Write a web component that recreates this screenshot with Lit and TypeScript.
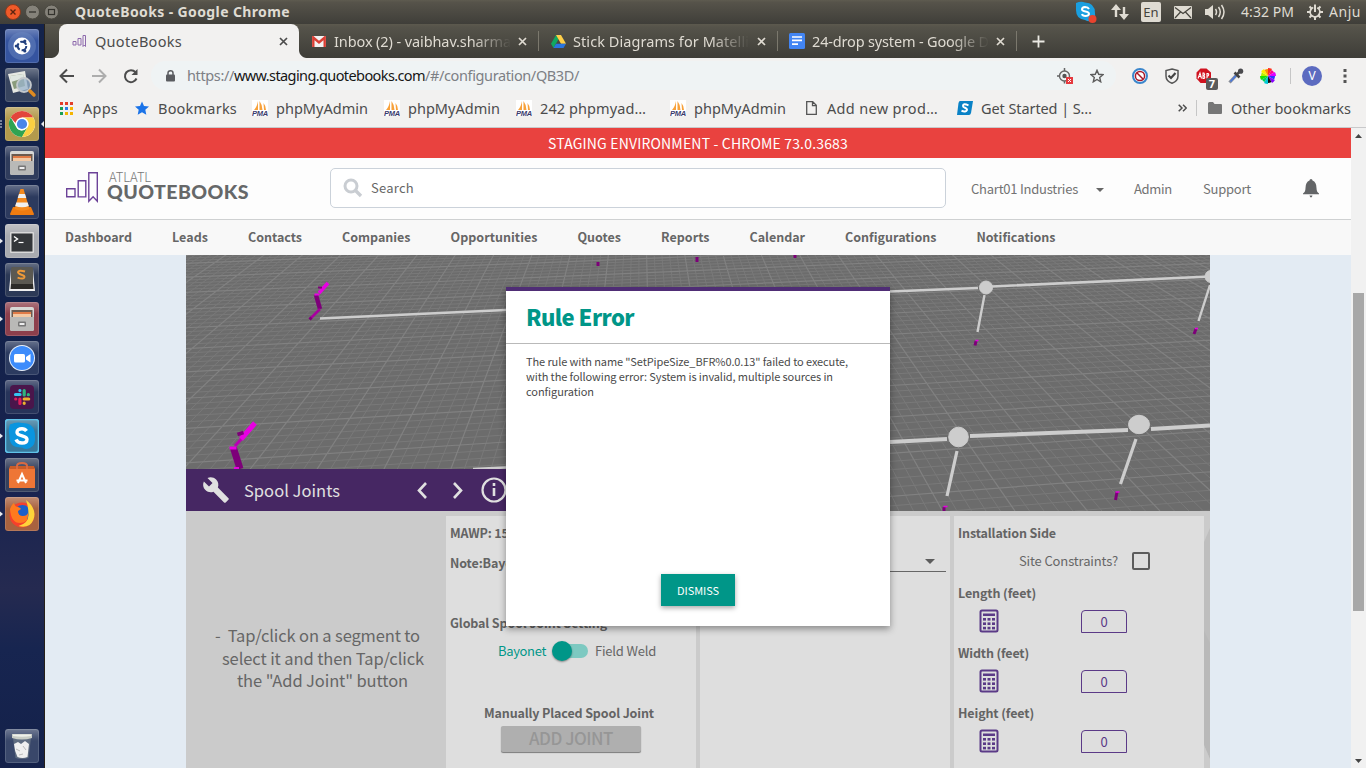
import { LitElement, html, css, svg, nothing } from "lit";
import { customElement, property } from "lit/decorators.js";
import { styleMap } from "lit/directives/style-map.js";

/** A single line of text tracked so that it spans exactly `w` pixels. */
@customElement("fit-text")
class FitText extends LitElement {
  @property({ type: Number }) w = 0;
  @property() text = "";
  static styles = css`
    :host { display: inline-block; white-space: pre; flex: none; }
    span { display: inline-block; white-space: pre; }
  `;
  render() {
    return html`<span>${this.text}</span>`;
  }
  updated() {
    const s = this.renderRoot.querySelector("span") as HTMLElement;
    s.style.letterSpacing = "0px";
    const natural = s.getBoundingClientRect().width;
    const gap = (this.w - natural) / this.text.length;
    s.style.letterSpacing = gap.toFixed(3) + "px";
    this.style.width = this.w + "px";
  }
}

const t = (text: string, w: number, cls = "") =>
  html`<fit-text class=${cls} .text=${text} .w=${w}></fit-text>`;

/* ---------- launcher ---------- */

const cabinet = svg`
  <rect x="5" y="5" width="24" height="24" rx="2" fill="#d8d8d6"/>
  <rect x="6.500" y="8" width="21" height="8" fill="#6b5a50"/>
  <path d="M8 10h18v5H8z" fill="#e07b48"/><path d="M8 12h18v3H8z" fill="#f3c9a4"/>
  <path d="M5 15h24v12a2 2 0 0 1-2 2H7a2 2 0 0 1-2-2z" fill="#b9b9b7"/>
  <rect x="13" y="19.500" width="8" height="5" rx="1" fill="#777"/><rect x="14.500" y="21" width="5" height="2" fill="#eee"/>`;

const launcher: { bg: string; run?: boolean; focus?: boolean; art: unknown }[] = [
  { bg: "#3554a0", art: svg`<circle cx="17" cy="17" r="14" fill="#6f8cc4" opacity=".45"/><circle cx="17" cy="17" r="8.500" fill="#fff"/><circle cx="17" cy="17" r="4.300" fill="none" stroke="#22407e" stroke-width="2" stroke-dasharray="7 2"/><circle cx="11.300" cy="17" r="1.600" fill="#22407e"/><circle cx="19.800" cy="12" r="1.600" fill="#22407e"/><circle cx="19.800" cy="22" r="1.600" fill="#22407e"/>` },
  { bg: "#37445f", art: svg`<path d="M3 6l17-3 3 18-15 4z" fill="#e6e8e2"/><path d="M5 8l13-2 2 12-11 3z" fill="#8a9c7c"/><path d="M5 8l13-2 1 4-13 4z" fill="#dfe6e0"/><circle cx="19" cy="17" r="7" fill="#9ab4cc" fill-opacity=".75" stroke="#c3c8cc" stroke-width="1.800"/><path d="M25 23l4 4" stroke="#e08b20" stroke-width="3.500" stroke-linecap="round"/>` },
  { bg: "#b39a4c", run: true, focus: true, art: svg`<circle cx="17" cy="17" r="13" fill="#fff"/><path d="M5.740 10.500A13 13 0 0 1 28.260 10.500L17 10.500 14 20z" fill="#e2453b"/><path d="M5.740 10.500L11.400 20.200A6.500 6.500 0 0 0 17 23.500L22.600 20.200 17 30A13 13 0 0 1 5.740 10.500z" fill="#2fa351"/><path d="M28.260 10.500A13 13 0 0 1 17 30L22.600 20.200A6.500 6.500 0 0 0 17 10.500z" fill="#fbd042"/><circle cx="17" cy="17" r="6.500" fill="#fff"/><circle cx="17" cy="17" r="5.100" fill="#4a86e8"/>` },
  { bg: "#2f3c5c", art: cabinet },
  { bg: "#2c3a5e", art: svg`<path d="M5 29l3-7h18l3 7q0 1-1 1H6q-1 0-1-1z" fill="#ef7b10"/><path d="M15.500 4h3l6 20q-7.500 3.500-15 0z" fill="#f58a1e"/><path d="M14 9h6l1.300 4h-8.600zM11.300 17.500h11.400l1.100 3.500q-6.800 2.500-13.600 0z" fill="#f0f0f0"/>` },
  { bg: "#a9abb0", run: true, art: svg`<rect x="5" y="8" width="24" height="21" rx="1" fill="#d9d9d9"/><rect x="6.500" y="9.500" width="21" height="18" fill="#34373a"/><path d="M9 12.500l3.500 2.500-3.500 2.500" fill="none" stroke="#fff" stroke-width="1.400"/><path d="M13.500 18.500h5" stroke="#fff" stroke-width="1.200"/>` },
  { bg: "#2c3956", art: svg`<path d="M6 6h22l2 22H4z" fill="#eee"/><rect x="6" y="4" width="22" height="19" rx="1.500" fill="#5b5952"/><path d="M6 21h22l.5 5h-23z" fill="#2c2b28"/><path d="M20 8.500q-6.500-2-7 .6 0 1.600 3.400 2.600t3 2.600q-.8 2.400-6.800.3" fill="none" stroke="#f09a38" stroke-width="2"/>` },
  { bg: "#8d3f4c", run: true, art: cabinet },
  { bg: "#2c3b60", art: svg`<circle cx="17" cy="17" r="13" fill="#e9f1fb"/><circle cx="17" cy="17" r="12" fill="#3d8cfb"/><rect x="9" y="13" width="11" height="8.500" rx="1.500" fill="#fff"/><path d="M21 16l4.500-3v8.500l-4.500-3z" fill="#fff"/>` },
  { bg: "#27345a", art: svg`<rect x="5" y="5" width="24" height="24" rx="4" fill="#4a154b"/><g stroke-width="3.200" stroke-linecap="round"><path d="M10.500 14.500h4.500M14.900 10.500v.1" stroke="#36c5f0"/><path d="M19.200 10.500v4.500M23.300 14.700h.1" stroke="#2eb67d"/><path d="M19.200 19h4.500M19.200 23.200v.1" stroke="#ecb22e"/><path d="M14.900 19v4.500M10.700 19h.1" stroke="#e01e5a"/></g>` },
  { bg: "#38799c", run: true, art: svg`<rect x=".5" y=".5" width="33" height="33" rx="3" fill="none" stroke="#5fc3ea" stroke-width="1.500"/><path d="M5 5.500q7-3 12-1.500 13 0 13 13 1 9-5 12-5 2-8-.5Q4 29 4.500 17 3 10 5 5.500z" fill="#0a95df"/><path d="M21.500 12Q20 9.700 17 9.700c-3 0-5 1.300-5 3.500 0 4.600 10 2.700 10 7 0 2.400-2 3.800-5 3.800-3.200 0-5-1.300-6-3.500" fill="none" stroke="#fff" stroke-width="3.400"/>` },
  { bg: "#35405c", art: svg`<path d="M4 10h26v20H4z" fill="#ee7636"/><path d="M5 8h24l1 3H4z" fill="#c95c28"/><path d="M12 11V8q0-3 5-3t5 3v3" fill="none" stroke="#d96a42" stroke-width="2"/><path d="M13 25l4-9 4 9M11.500 22.500h11" fill="none" stroke="#fff" stroke-width="2"/>` },
  { bg: "#a9623f", run: true, art: svg`<circle cx="17" cy="18" r="12.500" fill="#f5402c"/><circle cx="17.500" cy="16" r="8" fill="#1c60c8"/><path d="M21 3q8 6 8.500 14 0 7-5 11-5 3-11 1 10-3 10-11 0-8-2.500-15z" fill="#ffd43a"/><path d="M5 12q2-5 4-6 1 4 4 4 3 1 3 2l-3 2q0 5 5 5 4 0 5-3 1 10-8 10Q6 26 5 12z" fill="#ff7a1e"/>` },
];

@customElement("unity-launcher")
class UnityLauncher extends LitElement {
  static styles = css`
    :host {
      display: flex; flex-direction: column; justify-content: space-between;
      box-sizing: border-box; width: 45px; padding: 5px 0 5px; border-right: 1px solid #262019;
      background: linear-gradient(#14234b 0, #12214a 40%, #1a2450 64%, #252a50 76%, #172550 84%, #14214a 100%);
    }
    .stack { display: flex; flex-direction: column; gap: 5px; }
    .row { display: flex; align-items: center; height: 34px; }
    .pip { width: 5px; height: 34px; }
    .after { width: 4px; height: 34px; margin-left: 1px; }
    .tile {
      width: 34px; height: 34px; border-radius: 3px;
      box-shadow: inset 0 0 0 1px rgba(255,255,255,.14);
      background-image: linear-gradient(rgba(255,255,255,.28), rgba(255,255,255,0) 35%);
    }
    svg { display: block; }
  `;
  row(it: (typeof launcher)[number]) {
    return html`<div class="row">
      <svg class="pip" viewBox="0 0 5 34">${it.focus
        ? svg`<path d="M0 14h2M0 17h2M0 20h2" stroke="#dfe3ea"/>`
        : it.run ? svg`<path d="M0 14.500L3 17 0 19.500z" fill="#e8eaee"/>` : nothing}</svg>
      <div class="tile" style=${styleMap({ backgroundColor: it.bg })}><svg width="34" height="34">${it.art}</svg></div>
      <svg class="after" viewBox="0 0 4 34">${it.focus ? svg`<path d="M4 14v6L1 17z" fill="#e8eaee"/>` : nothing}</svg>
    </div>`;
  }
  render() {
    return html`<div class="stack">${launcher.map((i) => this.row(i))}</div>
      ${this.row({
        bg: "#39476a",
        art: svg`<path d="M8 9h18l-2.500 20q-6.500 2-13 0z" fill="#5f6c80"/><path d="M7 5h20v4q-10 3-20 0z" fill="#c9cdc6"/><path d="M8 5.500h18v1.500q-9 1.500-18 0z" fill="#eef0ea"/><path d="M9 15l4-2 3 2 4-3 4 3-1.500 13q-5 2-10 0-3-6-3.500-13z" fill="#efefef"/><path d="M11 20l4 2M18 17l3 4M14 26l4-1" stroke="#bbb"/>`,
      })}`;
  }
}

/* ---------- browser chrome ---------- */

const closeX = (c: string) =>
  html`<svg width="9" height="9" viewBox="0 0 9 9"><path d="M1 1l7 7M8 1L1 8" stroke=${c} stroke-width="1.700"/></svg>`;
const pma = html`<svg width="16" height="16" viewBox="0 0 16 16"><rect width="16" height="16" fill="#fff"/><path d="M6 1v9H2q3-3 4-9zM7.500 1q3 4 3 9h-3zM11.500 3q2.500 3 2.500 7h-2z" fill="#f8a13a"/><text x="0" y="15.500" class="pma">PMA</text></svg>`;

@customElement("browser-chrome")
class BrowserChrome extends LitElement {
  static styles = css`
    :host { display: flex; flex-direction: column; height: 104px; font: 14.500px/20px "Noto Sans", sans-serif; color: #4c4c4c; background: #f2f1f0; box-sizing: border-box; border-bottom: 1px solid #c9c9cb; }
    svg { display: block; flex: none; }
    .tabs { display: flex; height: 34px; background: linear-gradient(#5c594e 0, #55534a 10%, #3e3d38 100%); color: #dfdbd2; padding-left: 14px; box-sizing: border-box; }
    .tab { display: flex; flex: none; align-items: center; width: 239px; box-sizing: border-box; padding: 0 11px 0 12px; }
    .ic { display: flex; flex: none; width: 16px; margin-right: 7px; justify-content: center; }
    .title { flex: 1; overflow: hidden; height: 20px; }
    .fade { -webkit-mask-image: linear-gradient(90deg, #000 78%, transparent 100%); }
    .active { position: relative; width: 240px; background: #f2f1f0; border-radius: 8px 8px 0 0; color: #4c4c4c; }
    .active .ic { margin-right: 8px; }
    .active::before, .active::after { content: ""; position: absolute; bottom: 0; width: 8px; height: 8px; }
    .active::before { left: -8px; background: radial-gradient(circle at 0 0, transparent 7.500px, #f2f1f0 8.500px); }
    .active::after { right: -8px; background: radial-gradient(circle at 100% 0, transparent 7.500px, #f2f1f0 8.500px); }
    .sep { flex: none; width: 1px; height: 20px; background: #7b786d; align-self: center; margin-right: -1px; }
    .plus { align-self: center; margin-left: 16px; }
    .tools { display: flex; align-items: center; height: 35px; box-sizing: border-box; padding-left: 14px; }
    .gap { margin-left: 16px; }
    .omni { display: flex; flex: none; align-items: center; height: 29px; margin-left: 12px; width: 965px; background: #eff3f4; border-radius: 15px; padding: 0 12px 0 15px; box-sizing: border-box; }
    .lock { margin-right: 11px; }
    .url { display: flex; padding: 0 0 2px 1px; }
    .host { color: #161616; } .dim { color: #7d8085; }
    .fill { flex: 1; }
    .star { margin-left: 16px; }
    .ext { display: flex; align-items: center; gap: 16px; margin-left: 16px; }
    .abp { position: relative; }
    .badge { position: absolute; left: 10px; top: 10px; width: 12px; height: 12px; border-radius: 2px; background: #5b5b5b; color: #fff; font: bold 11px/12px "Open Sans", sans-serif; text-align: center; }
    .vr { flex: none; width: 1px; height: 16px; background: #c6c6c6; margin-left: 14px; }
    .marks .vr { margin-left: 9px; }
    .avatar { flex: none; width: 20px; height: 20px; border-radius: 50%; background: #5c6bc0; color: #fff; font: 12px/20px Roboto, sans-serif; text-align: center; margin: 0 21px 0 11px; }
    .marks { display: flex; align-items: center; height: 32px; padding: 0 0 2px 15px; box-sizing: border-box; }
    .apps { margin: 0 17px 0 10px; }
    .bm { margin: 0 15px 0 9px; }
    .m { display: flex; align-items: center; gap: 8px; margin-right: 16px; }
    .wide { margin-right: 24px; }
    .last { margin-right: 20px; }
    .doc { margin-right: 10px; }
    .s { margin: 0 8px 0 19px; }
    .more { margin-left: 86px; }
    .folder { margin: 0 9px 0 11px; }
    .pma { font: italic bold 7.500px "Liberation Sans", sans-serif; fill: #3a3a6e; letter-spacing: -0.300px; }
  `;
  render() {
    const tab = (ic: unknown, text: string, w: number) => html`<div class="tab"><span class="ic">${ic}</span><span class="title">${t(text, w, "fade")}</span>${closeX("#dfdbd2")}</div><i class="sep"></i>`;
    return html`
      <div class="tabs">
        <div class="tab active"><span class="ic"><svg width="15" height="12" viewBox="0 0 15 12"><path d="M1 6.500h3V10H1zM6 3.500h3V10H6zM11 .5h2.500V11.500L12.200 10 11 11.500z" fill="none" stroke="#8e6bad"/></svg></span><span class="title">${t("QuoteBooks", 87)}</span>${closeX("#4c4c4c")}</div>
        ${tab(html`<svg width="14" height="11" viewBox="0 0 14 11"><rect width="14" height="11" rx="1" fill="#f2f2f2"/><path d="M1.300 11V1.500L7 6.500l5.700-5V11" fill="none" stroke="#d93f35" stroke-width="2.400"/></svg>`, "Inbox (2) - vaibhav.sharma", 177)}
        ${tab(html`<svg width="15" height="13" viewBox="0 0 15 13"><path d="M5 0L0 8.700 2.500 13 7.500 4.300z" fill="#11a861"/><path d="M5 0h5l5 8.700h-5z" fill="#ffcf48"/><path d="M15 8.700L12.500 13h-10L5 8.700z" fill="#2a75e0"/></svg>`, "Stick Diagrams for Matelli", 176)}
        ${tab(html`<svg width="16" height="16"><rect width="16" height="16" rx="1.500" fill="#4285f4"/><path d="M3 4h10M3 7.300h10M3 11.200h6" stroke="#fff" stroke-width="1.700"/></svg>`, "24-drop system - Google D", 177)}
        <svg class="plus" width="13" height="13"><path d="M6.500 .5v12M.5 6.500h12" stroke="#eceae4" stroke-width="1.800"/></svg>
      </div>
      <div class="tools">
        <svg width="16" height="16" viewBox="0 0 16 16"><path d="M15 8H2M8 1.500L1.500 8 8 14.500" fill="none" stroke="#4c4c4c" stroke-width="2"/></svg>
        <svg class="gap" width="16" height="16" viewBox="0 0 16 16"><path d="M1 8h13M8 1.500L14.500 8 8 14.500" fill="none" stroke="#adadad" stroke-width="2"/></svg>
        <svg class="gap" width="16" height="16" viewBox="0 0 16 16"><path d="M13.500 10.500A6 6 0 1 1 12.500 4.200" fill="none" stroke="#4c4c4c" stroke-width="2"/><path d="M14.500 1v6h-6z" fill="#4c4c4c"/></svg>
        <div class="omni">
          <svg class="lock" width="9" height="12" viewBox="0 0 9 12"><rect y="4.500" width="9" height="7" rx="1" fill="#5a5c60"/><path d="M2 5V3q0-2.200 2.500-2.200T7 3v2" fill="none" stroke="#5a5c60" stroke-width="1.500"/></svg>
          <span class="url">${t("https://", 47, "dim")}${t("www.staging.quotebooks.com", 191, "host")}${t("/#/configuration/QB3D/", 154, "dim")}</span>
          <span class="fill"></span>
          <svg width="17" height="16" viewBox="0 0 17 16"><circle cx="7.500" cy="8" r="5" fill="none" stroke="#666" stroke-width="1.400"/><circle cx="7.500" cy="8" r="2.200" fill="#555"/><path d="M7.500 0v3M7.500 13v2.500M0 8h3" stroke="#666" stroke-width="1.500"/><rect x="9" y="9" width="7" height="7" fill="#e5393f"/><path d="M11 11l3 3M14 11l-3 3" stroke="#fff"/></svg>
          <svg class="star" width="14" height="14" viewBox="0 0 14 14"><path d="M7 1.300l1.700 4 4.300.4-3.300 2.800 1 4.300L7 10.500l-3.700 2.300 1-4.300L1 5.700l4.300-.4z" fill="none" stroke="#5c5c5c" stroke-width="1.400"/></svg>
        </div>
        <div class="ext">
          <svg width="16" height="16"><circle cx="8" cy="8" r="7" fill="#fff" stroke="#3b86cc" stroke-width="2"/><circle cx="8" cy="8" r="4.600" fill="none" stroke="#a8182a" stroke-width="1.500"/><path d="M4.800 4.800l6.400 6.400" stroke="#a8182a" stroke-width="1.500"/></svg>
          <svg width="16" height="16"><path d="M8 1l6 1.500V8q0 5-6 7.300Q2 13 2 8V2.500z" fill="none" stroke="#555" stroke-width="1.500"/><path d="M4.500 7.500L7 10l4.500-5" fill="none" stroke="#444" stroke-width="2.200"/></svg>
          <div class="abp"><svg width="16" height="16"><path d="M4.500 .5h6L15 4.500v6L10.500 15h-6L.5 10.500v-6z" fill="#d0121f"/><path d="M2 10.500L4 5l1.500 5.500M2.800 8.500H5M7 5v5.500h1q1.500-1.300 0-2.700 1.300-1.200 0-2.800zM11 10.500V5.500h1q1.500 1.300 0 2.500h-1" stroke="#fff" stroke-width="1.100" fill="none"/></svg><span class="badge">7</span></div>
          <svg width="16" height="16"><path d="M1.500 14.500L9 6.500" stroke="#8a8f98" stroke-width="3.200"/><path d="M2.500 13.500L8 7.500" stroke="#4a78dc" stroke-width="1.800"/><path d="M6.500 4.500l5 5M9 6.500l3-3.500" stroke="#444" stroke-width="2.600"/><circle cx="12.600" cy="3.200" r="2.600" fill="#4a4a4e"/></svg>
          <svg width="16" height="16" viewBox="-8 -8 16 16">${["#c800e0", "#ff2aa0", "#ff2a2a", "#ff9a00", "#f9e400", "#9fe800", "#00c853", "#00d5c5", "#1e88ff", "#2a20f0", "#111", "#ff00c8"].map((c, i) => {
            const a = (i * Math.PI) / 6, b = a + Math.PI / 6, r = i % 2 ? 8 : 7;
            return svg`<path d="M0 0L${r * Math.cos(a)} ${r * Math.sin(a)}A${r} ${r} 0 0 1 ${r * Math.cos(b)} ${r * Math.sin(b)}z" fill=${["#3030ff", "#8a00ff", "#111", "#00c8d8", "#00d060", "#20e000", "#b8f000", "#ffee00", "#ff9000", "#ff3020", "#ff0090", "#e000ff"][i]}/>`;
          })}</svg>
        </div>
        <i class="vr"></i>
        <span class="avatar">V</span>
        <svg width="4" height="14"><path d="M2 0v3M2 5.500v3M2 11v3" stroke="#555" stroke-width="3"/></svg>
      </div>
      <div class="marks">
        <svg width="13" height="13">${["#e33e2b", "#e33e2b", "#e33e2b", "#1a9e52", "#2b7de9", "#f4b400", "#1a9e52", "#f4b400", "#f4b400"].map((c, i) => svg`<rect x=${(i % 3) * 5} y=${Math.floor(i / 3) * 5} width="3" height="3" fill=${c}/>`)}</svg>
        <span class="apps">${t("Apps", 35)}</span>
        <svg width="14" height="14" viewBox="0 0 14 14"><path d="M7 .5l2 4.500 5 .5-3.700 3.200 1 5L7 11.200l-4.300 2.500 1-5L0 5.500 5 5z" fill="#1a73e8"/></svg>
        <span class="bm">${t("Bookmarks", 79)}</span>
        <span class="m">${pma}${t("phpMyAdmin", 92)}</span>
        <span class="m">${pma}${t("phpMyAdmin", 92)}</span>
        <span class="m wide">${pma}${t("242 phpmyad…", 106)}</span>
        <span class="m last">${pma}${t("phpMyAdmin", 92)}</span>
        <svg class="doc" width="11" height="14"><path d="M.7.700h6l3.600 3.600v9H.7zM6.500.700v4h4" fill="none" stroke="#555" stroke-width="1.300"/></svg>
        ${t("Add new prod…", 111)}
        <svg class="s" width="16" height="14"><path d="M3 0h13l-2 12q-.5 2-2 2H0L1.500 2Q2 0 3 0z" fill="#0a82c6"/><path d="M11.500 4.300Q6 2 6 5q0 1 2 1.800t2 2Q9 11.500 4.500 9.800" fill="none" stroke="#fff" stroke-width="2"/></svg>
        ${t("Get Started | S…", 111)}
        <svg class="more" width="9" height="8"><path d="M.7.700L4 4 .7 7.300M5 .7L8.300 4 5 7.300" fill="none" stroke="#4c4c4c" stroke-width="1.500"/></svg>
        <i class="vr"></i>
        <svg class="folder" width="14" height="12"><path d="M0 1.500Q0 0 1.500 0H5l1.500 2H13q1 0 1 1v8q0 1-1 1H1q-1 0-1-1z" fill="#767676"/></svg>
        ${t("Other bookmarks", 120)}
      </div>`;
  }
}

/* ---------- 3D viewport ---------- */

const W = 1024, H = 256;
function gridLines(): { minor: string; major: string } {
  let minor = "", major = "";
  const horizon = -286;
  const add = (x0: number, vx: number, k: number) => {
    const seg = `M${x0.toFixed(1)} 256L${vx} ${horizon}`;
    if (((k % 5) + 5) % 5 === 0) major += seg;
    else minor += seg;
  };
  for (let k = -90; k <= 90; k++) add(394 + k * 14.5, 454, k);
  for (let k = -70; k <= 22; k++) add(514 + k * 125, 7559, k);
  return { minor, major };
}

@customElement("scene-view")
class SceneView extends LitElement {
  static styles = css`:host, svg { display: block; }`;
  render() {
    const g = gridLines();
    return html`<svg width=${W} height=${H} viewBox="0 0 ${W} ${H}">
      <rect width=${W} height=${H} fill="#6c6c6c"/>
      <path d=${g.minor} stroke="#797979" stroke-width="1"/>
      <path d=${g.major} stroke="#818181" stroke-width="1.200"/>
      <g stroke="#cdcdcd" fill="#cdcdcd">
        <path d="M134 63.500L320 55" stroke-width="2.600"/>
        <path d="M704 36.500L792 33M806 31.500L1024 21.500M287 214L330 212" stroke-width="2.600"/>
        <path d="M704 187L761 184M784 181L942 175M965 174L1024 170.500" stroke-width="4"/>
        <path d="M798.500 40L791.500 77M1024 30L1012.500 66" stroke-width="2.400"/>
        <path d="M771 196L761 241M950 184L934.500 229" stroke-width="3.200"/>
        <circle cx="800" cy="32.500" r="6.500"/><circle cx="1025" cy="21.500" r="6"/>
        <circle cx="772.500" cy="182" r="9.800"/><ellipse cx="953" cy="169.500" rx="10.500" ry="9.200"/>
      </g>
      <g fill="none" stroke="#7d0079" stroke-width="4.500">
        <path d="M130 40L134 54" /><path d="M124 64L134 54" stroke="#a8009f" stroke-width="2.600"/><path d="M123.500 64.500l2-2" stroke-width="3"/>
        <path d="M133 38L142 28" stroke="#e800e2" stroke-width="3.600"/><path d="M128.500 39.500h5" stroke="#e800e2" stroke-width="2"/><path d="M132 32.500h4" stroke-width="2"/>
        <path d="M47.500 193L54 214" stroke-width="7"/>
        <path d="M49 191L58 181" stroke="#b800b3" stroke-width="3.200"/><path d="M55 184L69 168" stroke="#e800e2" stroke-width="5"/><path d="M43.500 193h7" stroke="#e800e2" stroke-width="3"/><path d="M51.500 179.500l6-2" stroke-width="3.500"/><path d="M48 213h5" stroke="#e800e2" stroke-width="2"/>
      </g>
      <g stroke="#7d0079" stroke-width="3">
        <path d="M790 86L789 90.500M1010 74L1008 79M931 237L929.500 245M758 252v4M412 7v4M511 2v5M609 0v3"/>
      </g>
      <path d="M789 86h3M1008.500 74h3M929 237.500h4M757 252h4" stroke="#e800e2" stroke-width="1.500" transform="translate(.5 -.5)"/>
    </svg>`;
  }
}

/* ---------- application ---------- */

@customElement("app-root")
class AppRoot extends LitElement {
  static styles = css`
    :host { display: grid; grid-template: 24px 744px / 45px 1321px; width: 1366px; height: 768px; overflow: hidden; font: 13px/20px "Noto Sans CJK JP", "Noto Sans CJK SC", sans-serif; color: #666; }
    svg { display: block; flex: none; }
    fit-text { vertical-align: top; }
    .panel { grid-column: 1 / 3; display: flex; align-items: center; background: linear-gradient(#5e5b50 0, #56534a 10%, #3f3e39 100%); color: #dfdbd2; font: 14px/22px "Noto Sans", sans-serif; box-sizing: border-box; padding-left: 5px; }
    .panel b { margin-left: 16px; font-size: 14px; }
    .wb { display: flex; gap: 4px; }
    .tray { display: flex; align-items: center; margin-left: auto; padding-right: 5px; }
    .arrows { margin-left: 14px; }
    .en { background: #dfdbd2; color: #45433c; border-radius: 2px; width: 20px; height: 20px; font: 13px/20px "Noto Sans", sans-serif; text-align: center; margin: 0 13px 0 12px; }
    .vol { margin: 0 15px 0 13px; }
    .gear { margin: 0 6px 0 13px; }
    .browser { min-width: 0; }
    .view { display: flex; height: 640px; }
    .page { width: 1306px; height: 640px; background: #e3ebf3; position: relative; overflow: hidden; }
    .bar { width: 15px; background: #f1f1f1; display: flex; flex-direction: column; align-items: center; box-sizing: border-box; padding: 6px 0 5px; }
    .thumb { width: 11px; height: 318px; background: #a8a8a8; margin-top: 155px; margin-bottom: auto; }
    .banner { background: #e9423f; color: #fff; height: 30px; font-size: 14px; line-height: 30px; display: flex; justify-content: center; }
    .head { display: flex; height: 62px; background: #fdfdfd; border-bottom: 1px solid #cfd1d2; align-items: center; box-sizing: border-box; padding: 0 0 1px 21px; }
    .brand { display: flex; flex-direction: column; margin: -7px 0 0 9px; width: 142px; }
    .brand .a { font-size: 13px; line-height: 14px; font-weight: 300; color: #777; margin-left: 2px; }
    .brand .q { font-family: Lato, sans-serif; font-size: 19.500px; line-height: 16px; font-weight: 900; color: #666869; }
    .search { display: flex; align-items: center; width: 616px; height: 40px; box-sizing: border-box; border: 1px solid #cbd2da; border-radius: 5px; background: #fff; margin-left: 81px; padding-left: 12px; gap: 8px; }
    .links { display: flex; align-items: center; color: #737373; margin-left: 25px; padding-top: 1px; }
    .caret { margin: 3px 30px 0 18px; }
    .support { margin: 0 52px 0 31px; }
    .nav { display: flex; gap: 40px; height: 35px; background: #f8f8f8; padding-left: 20px; font-weight: 700; line-height: 33px; color: #666; font-size: 12.500px; }
    .cfg { width: 1024px; margin-left: 141px; height: 513px; }
    .toolbar { display: flex; align-items: center; width: 512px; height: 42px; background: #462763; color: #e0e0e0; margin-top: -42px; position: relative; font-size: 16.500px; box-sizing: border-box; padding-left: 16px; }
    .tool { margin: 0 77px 0 14px; }
    .next { margin: 0 18px 0 26px; }
    .body { display: flex; height: 257px; padding-top: 5px; box-sizing: border-box; background: #cbcbcb; }
    .hint { display: flex; flex-direction: column; width: 260px; box-sizing: border-box; padding: 108px 0 0 29px; font-size: 16.500px; line-height: 22.500px; color: #666; }
    .l2 { margin-left: 7px; } .l3 { margin-left: 22px; }
    .cols { display: flex; flex: none; gap: 4px; height: 252px; }
    .col { flex: none; width: 250px; height: 252px; background: #dedede; padding: 7px 4px 0; box-sizing: border-box; }
    .edge { width: 6px; margin-left: -4px; height: 252px; }
    .b { font-weight: 700; color: #646464; font-size: 12.500px; }
    .note { margin-top: 10px; }
    .global { margin-top: 40px; }
    .manual { margin: 42px 0 0 34px; }
    .row { display: flex; align-items: center; }
    .sw { margin: 8px 0 0 48px; }
    .site { margin: 8px 0 12px 61px; }
    .teal { color: #009688; }
    .track { position: relative; width: 36px; height: 20px; margin: 0 7px 0 6px; }
    .track i { position: absolute; left: 3px; top: 3px; width: 33px; height: 14px; border-radius: 7px; background: #7dc9c1; }
    .track u { position: absolute; left: 0; top: 0; width: 20px; height: 20px; border-radius: 50%; background: #009688; box-shadow: 0 1px 2px rgba(0,0,0,.4); }
    .add { display: flex; justify-content: center; width: 140px; height: 26px; line-height: 24px; margin: 3px 0 0 51px; background: #afafaf; border-radius: 2px; box-shadow: 0 1px 1px rgba(0,0,0,.45); color: #969696; font-size: 17px; font-weight: 500; box-sizing: border-box; }
    .drop { display: flex; width: 242px; height: 39px; border-bottom: 1px solid #666; box-sizing: border-box; align-items: flex-end; justify-content: flex-end; padding: 0 11px 7px 0; margin-top: 10px; }
    .check { width: 18px; height: 18px; box-sizing: border-box; border: 2px solid #5c5c5c; border-radius: 2px; margin-left: 14px; }
    .num { display: flex; align-items: center; height: 40px; padding: 0 0 4px 21px; box-sizing: border-box; }
    .box { margin-left: 82px; width: 46px; height: 23px; box-sizing: border-box; border: 1px solid #5b3a87; border-radius: 4px 4px 0 0; color: #5b3a87; text-align: center; line-height: 22px; font-size: 13px; }
    .dialog { position: absolute; left: 461px; top: 159px; width: 384px; height: 339px; background: #fff; border-top: 4px solid #4f2d75; box-sizing: border-box; box-shadow: 0 3px 7px rgba(0,0,0,.38); display: flex; flex-direction: column; }
    .dialog h1 { margin: 0; height: 53px; box-sizing: border-box; border-bottom: 1px solid #b9b9b9; padding-left: 20px; font-size: 22px; line-height: 51px; font-weight: 900; color: #009688; }
    .msg { display: flex; flex-direction: column; padding: 10px 0 0 20px; font-size: 11px; line-height: 15px; color: #4a4a4a; }
    .ok { display: flex; justify-content: center; margin: auto auto 20px; width: 74px; height: 32px; background: #009688; color: #fff; font-size: 11px; line-height: 32px; box-shadow: 0 2px 5px rgba(0,0,0,.35); }
  `;
  dim(label: string, w: number) {
    const dots = [0, 1, 2].flatMap((r) => [0, 1, 2].map((c) => svg`<rect x=${4 + c * 4.5} y=${9 + r * 4.4} width="3" height="2.600" fill="#5b3a87"/>`));
    return html`<div class="b">${t(label, w)}</div>
      <div class="num"><svg width="20" height="24"><rect x="1.500" y="1.500" width="17" height="21" rx="1.500" fill="none" stroke="#5b3a87" stroke-width="2"/><rect x="4" y="4.500" width="12" height="2.500" fill="#5b3a87"/>${dots}</svg><span class="box">0</span></div>`;
  }
  render() {
    const nav: [string, number][] = [["Dashboard", 67], ["Leads", 36], ["Contacts", 54], ["Companies", 68.5], ["Opportunities", 87], ["Quotes", 43.5], ["Reports", 48.5], ["Calendar", 55.5], ["Configurations", 91.5], ["Notifications", 79]];
    const down = (c: string, w: number, h: number) => html`<svg width=${w} height=${h} viewBox="0 0 10 5" preserveAspectRatio="none"><path d="M0 0h10L5 5z" fill=${c}/></svg>`;
    return html`
      <div class="panel">
        <div class="wb">
          <svg width="16" height="16"><circle cx="8" cy="8" r="7.500" fill="#ef5a29" stroke="#8c3a1e"/><path d="M5.500 5.500l5 5M10.500 5.500l-5 5" stroke="#5b2410" stroke-width="1.400"/></svg>
          <svg width="15" height="16"><circle cx="7.500" cy="8" r="7" fill="#85827a" stroke="#4a4840"/><path d="M4 8h7" stroke="#33322d" stroke-width="1.300"/></svg>
          <svg width="15" height="16"><circle cx="7.500" cy="8" r="7" fill="#85827a" stroke="#4a4840"/><rect x="4.500" y="5.500" width="6" height="5" fill="none" stroke="#33322d" stroke-width="1.200"/></svg>
        </div>
        <b>${t("QuoteBooks - Google Chrome", 215)}</b>
        <div class="tray">
          <svg width="22" height="22"><path d="M1 2q5-2 9-.5Q20 2 20 12q1 6-3 8-4 1-7-1Q1 18 1 9z" fill="#1a9fe0"/><path d="M14 8q-1-2-4-2-3 .3-3 2.300 0 1.700 3.500 2.200t3.500 2.500q-.5 2-3.500 2T7 13" fill="none" stroke="#fff" stroke-width="2"/><circle cx="17.500" cy="18" r="4" fill="#e8432e"/></svg>
          <svg class="arrows" width="18" height="16"><path d="M5 13V3M13 3v11" stroke="#dfdbd2" stroke-width="2.400"/><path d="M0 6l5-6 5 6zM8 10l5 6 5-6z" fill="#dfdbd2"/></svg>
          <span class="en">En</span>
          <svg width="18" height="13"><rect width="18" height="13" rx="1" fill="#dfdbd2"/><path d="M1 1.500l8 6 8-6M1 12l5.500-6M17 12l-5.500-6" fill="none" stroke="#45433c" stroke-width="1.200"/></svg>
          <svg class="vol" width="21" height="16"><path d="M0 5h3l5-4v14l-5-4H0z" fill="#dfdbd2"/><path d="M10.500 5q2 3 0 6M13.500 3q3.500 5 0 10M16.500 1q5 7 0 14" fill="none" stroke="#dfdbd2" stroke-width="1.500"/></svg>
          ${t("4:32 PM", 53)}
          <svg class="gear" width="16" height="16" viewBox="-8 -8 16 16"><circle r="4.800" fill="none" stroke="#dfdbd2" stroke-width="1.800" stroke-dasharray="25.400 4.800" transform="rotate(-62)"/><path d="M0-7.500V0M0 5v3M5 0h3M-5 0h-3M3.500 3.500l2 2M-3.500 3.500l-2 2M3.500-3.500l2-2M-3.500-3.500l-2-2" stroke="#dfdbd2" stroke-width="2"/></svg>
          ${t("Anju", 32)}
        </div>
      </div>
      <unity-launcher></unity-launcher>
      <div class="browser">
        <browser-chrome></browser-chrome>
        <div class="view">
          <div class="page">
            <div class="banner">${t("STAGING ENVIRONMENT - CHROME 73.0.3683", 300)}</div>
            <div class="head">
              <svg width="32" height="32"><path d="M.7 16.800h8.300v8H.7zM12.200 8.700h7.600v16.200h-7.600zM22.800.700h8.500v28.500l-4.200-4.400-4.300 4.400z" fill="none" stroke="#6c4298" stroke-width="1.400"/></svg>
              <div class="brand"><span class="a">${t("ATLATL", 42)}</span><span class="q">${t("QUOTEBOOKS", 142)}</span></div>
              <div class="search"><svg width="20" height="20"><circle cx="8" cy="8" r="6" fill="none" stroke="#c9cdd2" stroke-width="3"/><path d="M12.500 12.500l5.500 5.500" stroke="#c9cdd2" stroke-width="3.400"/></svg>${t("Search", 43)}</div>
              <div class="links">${t("Chart01 Industries", 107)}<span class="caret">${down("#666", 8, 4)}</span>${t("Admin", 38)}<span class="support">${t("Support", 48)}</span>
                <svg width="16" height="19"><path d="M8 0q1.500 0 1.500 1.500Q13.500 3 13.500 9q0 4 2.500 5.500v.8H0v-.8Q2.500 13 2.500 9q0-6 4-7.500Q6.500 0 8 0zM6.500 16.500h3Q9 18.500 8 18.500T6.500 16.500z" fill="#636567"/></svg></div>
            </div>
            <div class="nav">${nav.map(([n, w]) => t(n, w))}</div>
            <div class="cfg">
              <scene-view></scene-view>
              <div class="toolbar">
                <svg width="28" height="28" viewBox="0 0 24 24"><path d="M22.700 19l-9.100-9.100c.9-2.300.4-5-1.500-6.900-2-2-5-2.400-7.400-1.300L9 6 6 9 1.600 4.700C.4 7.100.9 10.100 2.900 12.100c1.900 1.900 4.600 2.400 6.900 1.500l9.100 9.100c.4.4 1 .4 1.400 0l2.300-2.300c.5-.4.5-1.100.1-1.400z" fill="#e0e0e0"/></svg>
                <span class="tool">${t("Spool Joints", 96)}</span>
                <svg width="10" height="17"><path d="M9 1L2 8.500 9 16" fill="none" stroke="#e0e0e0" stroke-width="2.600"/></svg>
                <svg class="next" width="10" height="17"><path d="M1 1l7 7.500L1 16" fill="none" stroke="#e0e0e0" stroke-width="2.600"/></svg>
                <svg width="26" height="26"><circle cx="13" cy="13" r="11.500" fill="none" stroke="#e0e0e0" stroke-width="2.200"/><path d="M13 6v3M13 11v8" stroke="#e0e0e0" stroke-width="2.600"/></svg>
              </div>
              <div class="body">
                <div class="hint"><span>${t("-  Tap/click on a segment to", 205)}</span><span class="l2">${t("select it and then Tap/click", 202)}</span><span class="l3">${t('the "Add Joint" button', 171)}</span></div>
                <div class="cols">
                  <div class="col">
                    <div class="b">${t("MAWP: 150", 66)}</div>
                    <div class="b note">${t("Note:Bayonet", 83)}</div>
                    <div class="b global">${t("Global Spool Joint Setting", 157)}</div>
                    <div class="row sw"><span class="teal">${t("Bayonet", 48)}</span><span class="track"><i></i><u></u></span>${t("Field Weld", 61)}</div>
                    <div class="b manual">${t("Manually Placed Spool Joint", 170)}</div>
                    <div class="add">${t("ADD JOINT", 84)}</div>
                  </div>
                  <div class="col"><div class="drop">${down("#5c5c5c", 10, 5)}</div></div>
                  <div class="col">
                    <div class="b">${t("Installation Side", 98)}</div>
                    <div class="row site">${t("Site Constraints?", 99)}<span class="check"></span></div>
                    ${this.dim("Length (feet)", 78)}${this.dim("Width (feet)", 71)}${this.dim("Height (feet)", 76)}
                  </div>
                  <svg class="edge" width="6" height="252"><rect width="6" height="252" fill="#bebebe"/><path d="M0 0h6v12L0 26z" fill="#cbcbcb"/><path d="M0 115l6 12v116L0 229z" fill="#b9b9b9"/><path d="M0 229l6 14v9H0z" fill="#cbcbcb"/></svg>
                </div>
              </div>
            </div>
            <div class="dialog">
              <h1>${t("Rule Error", 108)}</h1>
              <div class="msg">${t('The rule with name "SetPipeSize_BFR%0.0.13" failed to execute,', 322)}${t("with the following error: System is invalid, multiple sources in", 307)}${t("configuration", 68)}</div>
              <div class="ok">${t("DISMISS", 42)}</div>
            </div>
          </div>
          <div class="bar"><svg width="7" height="4"><path d="M0 4h7L3.500 0z" fill="#444"/></svg><i class="thumb"></i>${down("#444", 7, 4)}</div>
        </div>
      </div>`;
  }
}
